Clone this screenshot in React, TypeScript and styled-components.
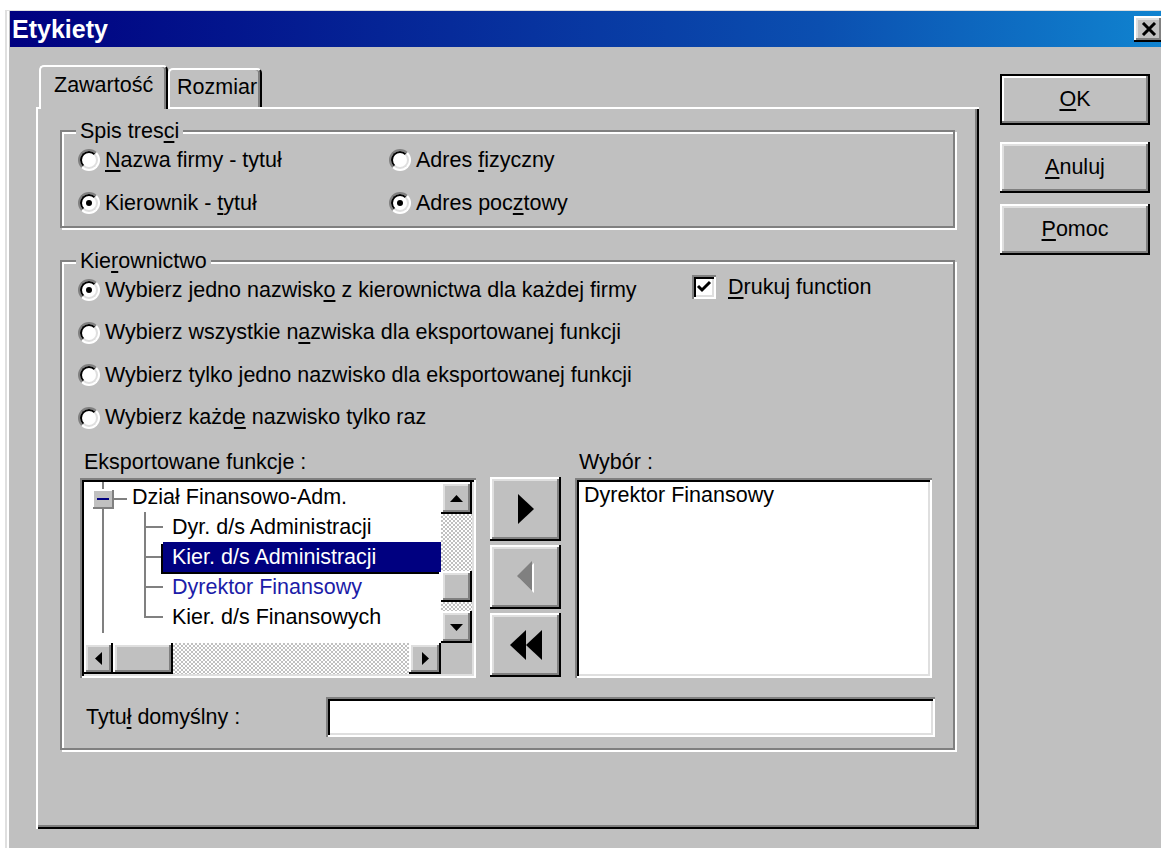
import React from 'react';
import styled, { createGlobalStyle, css } from 'styled-components';

const GlobalStyle = createGlobalStyle`
  html, body {
    margin: 0;
    padding: 0;
    background: #fff;
    overflow: hidden;
  }
  body {
    font-family: "Liberation Sans", Arial, sans-serif;
    font-size: 21.5px;
    color: #000;
  }
  * { box-sizing: border-box; }
`;

// classic 3d edges
const raised = css`
  background: #c0c0c0;
  box-shadow: inset -2px -2px 0 #000, inset 2px 2px 0 #fff,
    inset -4px -4px 0 #808080, inset 4px 4px 0 #dfdfdf;
`;

const sunken = css`
  background: #fff;
  box-shadow: inset 2px 2px 0 #808080, inset -2px -2px 0 #fff,
    inset 4px 4px 0 #000, inset -4px -4px 0 #dfdfdf;
`;

const Window = styled.div`
  margin: 10px 0 0 5px;
  width: 1162px;
  height: 838px;
  background: #c0c0c0;
  border-top: 1px solid #dfdfdf;
  border-left: 2px solid #dfdfdf;
  box-shadow: inset 2px 0 0 #fff;
  padding-left: 3px;
`;

const TitleBar = styled.div`
  height: 36px;
  display: flex;
  align-items: center;
  padding-left: 2px;
  background: linear-gradient(90deg, #000080 0%, #0b4fb0 70%, #1084d0 100%);
  color: #fff;
  font-weight: bold;
  font-size: 25px;
`;

const CloseButton = styled.div`
  ${raised};
  margin-left: auto;
  margin-right: 4px;
  width: 29px;
  height: 26px;
  display: flex;
  align-items: center;
  justify-content: center;
`;

const Content = styled.div`
  display: flex;
  padding: 18px 0 0 26px;
`;

const TabArea = styled.div`
  width: 943px;
  display: flex;
  flex-direction: column;
`;

const TabRow = styled.div`
  height: 42px;
  display: flex;
  align-items: flex-end;
  padding-left: 3px;
`;

const Tab = styled.div<{ $active?: boolean }>`
  background: #c0c0c0;
  border-top: 2px solid #fff;
  border-left: 2px solid #fff;
  border-right: 2px solid #000;
  border-radius: 5px 5px 0 0;
  box-shadow: inset -2px 0 0 #808080;
  line-height: 24px;
  white-space: nowrap;
  ${(p) =>
    p.$active
      ? css`
          position: relative;
          z-index: 1;
          width: 129px;
          height: 44px;
          margin-bottom: -2px;
          padding: 6px 0 0 13px;
        `
      : css`
          width: 94px;
          height: 39px;
          padding: 5px 0 0 7px;
        `}
`;

const Panel = styled.div`
  height: 722px;
  background: #c0c0c0;
  box-shadow: inset 2px 2px 0 #fff, inset -2px -2px 0 #000, inset -4px -4px 0 #808080;
  padding: 23px 24px 0 24px;
`;

const Group = styled.div<{ $gap?: number }>`
  position: relative;
  border: 2px solid #808080;
  box-shadow: inset 2px 2px 0 #fff, 2px 2px 0 #fff;
  margin-top: ${(p) => p.$gap ?? 0}px;
`;

const GroupTitle = styled.span`
  position: absolute;
  top: -13px;
  left: 14px;
  padding: 0 4px;
  background: #c0c0c0;
  line-height: 24px;
`;

const ContentsGrid = styled.div`
  display: grid;
  grid-template-columns: 311px auto;
  grid-auto-rows: 36px;
  row-gap: 7px;
  padding: 10px 0 5px 16px;
`;

const ManagementBody = styled.div`
  padding: 10px 18px 11px 16px;
`;

const ChoiceGrid = styled.div`
  display: grid;
  grid-template-columns: 614px auto;
  grid-auto-rows: 36px;
  row-gap: 6.5px;
`;

const Option = styled.label`
  display: flex;
  align-items: center;
  gap: 5px;
  white-space: nowrap;
`;

const RadioCircle = styled.span<{ $checked?: boolean }>`
  position: relative;
  flex: none;
  width: 22px;
  height: 22px;
  border-radius: 50%;
  border: 2px solid;
  border-color: #808080 #fff #fff #808080;
  background: #fff;

  &::before {
    content: '';
    position: absolute;
    inset: 0;
    border-radius: 50%;
    border: 2px solid;
    border-color: #000 #dfdfdf #dfdfdf #000;
  }

  &::after {
    content: '';
    display: ${(p) => (p.$checked ? 'block' : 'none')};
    position: absolute;
    left: 6px;
    top: 6px;
    width: 6px;
    height: 6px;
    border-radius: 50%;
    background: #000;
  }
`;

const CheckOption = styled.label`
  display: flex;
  align-items: center;
  gap: 12px;
  margin-bottom: 6px;
  white-space: nowrap;
`;

const CheckBox = styled.span`
  ${sunken};
  flex: none;
  width: 24px;
  height: 24px;
  display: flex;
  align-items: center;
  justify-content: center;
`;

const Key = styled.span`
  text-decoration: underline;
  text-underline-offset: 3px;
  text-decoration-thickness: 2px;
`;

const Lower = styled.div`
  margin-top: 14.5px;
  padding-left: 2px;
  display: grid;
  grid-template-columns: 396px 71px 357px;
  grid-template-rows: 24px 200px;
  column-gap: 14px;
  row-gap: 4px;
`;

const FieldLabel = styled.div<{ $col: number }>`
  grid-column: ${(p) => p.$col};
  grid-row: 1;
  line-height: 24px;
  padding-left: 4px;
  white-space: nowrap;
`;

const TreeBox = styled.div`
  ${sunken};
  grid-column: 1;
  grid-row: 2;
  padding: 4px;
  display: grid;
  grid-template-columns: 1fr 31px;
  grid-template-rows: 1fr 31px;
`;

const TreeViewport = styled.div`
  position: relative;
  overflow: hidden;
  background: #fff;
`;

const TreeLines = styled.svg`
  position: absolute;
  left: 0;
  top: 0;
`;

const TreeList = styled.div`
  position: relative;
`;

const TreeRow = styled.div<{ $depth: number; $selected?: boolean; $marked?: boolean }>`
  height: 30px;
  line-height: 30px;
  white-space: nowrap;
  margin-left: ${(p) => (p.$depth === 0 ? 44 : 79)}px;
  padding-left: ${(p) => (p.$depth === 0 ? 4 : 9)}px;
  color: ${(p) => (p.$selected ? '#fff' : p.$marked ? '#1c1ca8' : '#000')};
  background: ${(p) => (p.$selected ? '#000080' : 'transparent')};
  box-shadow: ${(p) => (p.$selected ? '-2px 2px 0 #000' : 'none')};
`;

const ScrollV = styled.div`
  display: flex;
  flex-direction: column;
`;

const ScrollH = styled.div`
  display: flex;
`;

const ScrollButton = styled.div<{ $size: number; $vertical?: boolean }>`
  ${raised};
  flex: none;
  ${(p) => (p.$vertical ? `height: ${p.$size}px;` : `width: ${p.$size}px;`)}
  display: flex;
  align-items: center;
  justify-content: center;
`;

const Thumb = styled.div<{ $size: number; $vertical?: boolean }>`
  ${raised};
  flex: none;
  ${(p) => (p.$vertical ? `height: ${p.$size}px;` : `width: ${p.$size}px;`)}
`;

const Track = styled.div<{ $size?: number }>`
  flex: ${(p) => (p.$size ? `none` : '1')};
  ${(p) => (p.$size ? `height: ${p.$size}px;` : '')}
  background-color: #c0c0c0;
  background-image: repeating-conic-gradient(#c0c0c0 0 25%, #fff 0 50%);
  background-size: 4px 4px;
`;

const Corner = styled.div`
  background: #c0c0c0;
`;

const MoveButtons = styled.div`
  grid-column: 2;
  grid-row: 2;
  display: flex;
  flex-direction: column;
  gap: 4px;
  margin-top: -1px;
`;

const MoveButton = styled.div`
  ${raised};
  height: 64px;
  display: flex;
  align-items: center;
  justify-content: center;
`;

const ChosenList = styled.div`
  ${sunken};
  grid-column: 3;
  grid-row: 2;
  padding: 4px 9px;
  line-height: 26px;
  white-space: nowrap;
`;

const TitleRow = styled.div`
  margin-top: 19px;
  padding-left: 2px;
  display: flex;
  align-items: center;
`;

const TitleLabel = styled.div`
  width: 246px;
  padding-left: 6px;
  white-space: nowrap;
`;

const TextField = styled.div`
  ${sunken};
  width: 609px;
  height: 40px;
`;

const ButtonColumn = styled.div`
  width: 150px;
  margin-left: 21px;
  padding-top: 9px;
  display: flex;
  flex-direction: column;
  gap: 11px;
`;

const DialogButton = styled.div<{ $default?: boolean }>`
  height: 51px;
  display: flex;
  align-items: center;
  justify-content: center;
  ${(p) =>
    p.$default
      ? css`
          margin-bottom: 6px;
          border: 2px solid #000;
          background: #c0c0c0;
          box-shadow: inset -2px -2px 0 #808080, inset 2px 2px 0 #fff;
        `
      : raised}
`;

const CloseIcon = () => (
  <svg width="16" height="14" viewBox="0 0 16 14">
    <path d="M2 1 L14 13 M14 1 L2 13" stroke="#000" strokeWidth="3" />
  </svg>
);

const CheckMark = () => (
  <svg width="16" height="16" viewBox="0 0 16 16">
    <polyline points="2,7 6,11 14,3" fill="none" stroke="#000" strokeWidth="3" />
  </svg>
);

const Arrow = ({ dir, w, h }: { dir: 'up' | 'down' | 'left' | 'right'; w: number; h: number }) => {
  const pts = {
    up: `${w / 2},0 ${w},${h} 0,${h}`,
    down: `0,0 ${w},0 ${w / 2},${h}`,
    left: `${w},0 ${w},${h} 0,${h / 2}`,
    right: `0,0 ${w},${h / 2} 0,${h}`,
  }[dir];
  return (
    <svg width={w} height={h} viewBox={`0 0 ${w} ${h}`}>
      <polygon points={pts} fill="#000" />
    </svg>
  );
};

const DisabledLeft = () => (
  <svg width="20" height="32" viewBox="0 0 20 32">
    <polygon points="18,2 18,32 3,17" fill="#fff" />
    <polygon points="16,0 16,30 1,15" fill="#808080" />
  </svg>
);

const DoubleLeft = () => (
  <svg width="32" height="30" viewBox="0 0 32 30">
    <polygon points="16,0 16,30 0,15" fill="#000" />
    <polygon points="32,0 32,30 16,15" fill="#000" />
  </svg>
);

const exported = [
  { label: 'Dział Finansowo-Adm.', depth: 0 },
  { label: 'Dyr. d/s Administracji', depth: 1 },
  { label: 'Kier. d/s Administracji', depth: 1, selected: true },
  { label: 'Dyrektor Finansowy', depth: 1, marked: true },
  { label: 'Kier. d/s Finansowych', depth: 1 },
];

const Radio = ({ checked, children }: { checked?: boolean; children: React.ReactNode }) => (
  <Option>
    <RadioCircle $checked={checked} />
    <span>{children}</span>
  </Option>
);

const App: React.FC = () => {
  return (
    <>
      <GlobalStyle />
      <Window>
        <TitleBar>
          Etykiety
          <CloseButton>
            <CloseIcon />
          </CloseButton>
        </TitleBar>
        <Content>
          <TabArea>
            <TabRow>
              <Tab $active>Zawartość</Tab>
              <Tab>Rozmiar</Tab>
            </TabRow>
            <Panel>
              <Group>
                <GroupTitle>
                  Spis tres<Key>c</Key>i
                </GroupTitle>
                <ContentsGrid>
                  <Radio>
                    <Key>N</Key>azwa firmy - tytuł
                  </Radio>
                  <Radio>
                    Adres <Key>f</Key>izyczny
                  </Radio>
                  <Radio checked>
                    Kierownik - <Key>t</Key>ytuł
                  </Radio>
                  <Radio checked>
                    Adres poc<Key>z</Key>towy
                  </Radio>
                </ContentsGrid>
              </Group>

              <Group $gap={32}>
                <GroupTitle>
                  Kie<Key>r</Key>ownictwo
                </GroupTitle>
                <ManagementBody>
                  <ChoiceGrid>
                    <Radio checked>
                      Wybierz jedno nazwisk<Key>o</Key> z kierownictwa dla każdej firmy
                    </Radio>
                    <CheckOption>
                      <CheckBox>
                        <CheckMark />
                      </CheckBox>
                      <span>
                        <Key>D</Key>rukuj function
                      </span>
                    </CheckOption>
                    <Radio>
                      Wybierz wszystkie n<Key>a</Key>zwiska dla eksportowanej funkcji
                    </Radio>
                    <span />
                    <Radio>Wybierz tylko jedno nazwisko dla eksportowanej funkcji</Radio>
                    <span />
                    <Radio>
                      Wybierz każd<Key>e</Key> nazwisko tylko raz
                    </Radio>
                  </ChoiceGrid>

                  <Lower>
                    <FieldLabel $col={1}>Eksportowane funkcje :</FieldLabel>
                    <FieldLabel $col={3}>Wybór :</FieldLabel>
                    <TreeBox>
                      <TreeViewport>
                        <TreeLines width="100" height="160">
                          <line x1="19" y1="0" x2="19" y2="151" stroke="#808080" strokeWidth="2" />
                          <line x1="29" y1="17" x2="43" y2="17" stroke="#808080" strokeWidth="2" />
                          <line x1="61" y1="30" x2="61" y2="136" stroke="#808080" strokeWidth="2" />
                          {[45, 75, 105, 135].map((y) => (
                            <line key={y} x1="61" y1={y} x2="79" y2={y} stroke="#808080" strokeWidth="2" />
                          ))}
                          <rect x="9" y="8" width="20" height="18" fill="#c0c0c0" />
                          <path d="M9 26 V8 H29" fill="none" stroke="#fff" strokeWidth="2" />
                          <path d="M9 26 H29 V8" fill="none" stroke="#808080" strokeWidth="2" />
                          <line x1="13" y1="17" x2="25" y2="17" stroke="#000080" strokeWidth="2" />
                        </TreeLines>
                        <TreeList>
                          {exported.map((item) => (
                            <TreeRow
                              key={item.label}
                              $depth={item.depth}
                              $selected={item.selected}
                              $marked={item.marked}
                            >
                              {item.label}
                            </TreeRow>
                          ))}
                        </TreeList>
                      </TreeViewport>
                      <ScrollV>
                        <ScrollButton $vertical $size={32}>
                          <Arrow dir="up" w={13} h={7} />
                        </ScrollButton>
                        <Track $size={57} />
                        <Thumb $vertical $size={31} />
                        <Track />
                        <ScrollButton $vertical $size={32}>
                          <Arrow dir="down" w={13} h={7} />
                        </ScrollButton>
                      </ScrollV>
                      <ScrollH>
                        <ScrollButton $size={29}>
                          <Arrow dir="left" w={7} h={13} />
                        </ScrollButton>
                        <Thumb $size={60} />
                        <Track />
                        <ScrollButton $size={32}>
                          <Arrow dir="right" w={7} h={13} />
                        </ScrollButton>
                      </ScrollH>
                      <Corner />
                    </TreeBox>

                    <MoveButtons>
                      <MoveButton>
                        <Arrow dir="right" w={16} h={30} />
                      </MoveButton>
                      <MoveButton>
                        <DisabledLeft />
                      </MoveButton>
                      <MoveButton>
                        <DoubleLeft />
                      </MoveButton>
                    </MoveButtons>

                    <ChosenList>Dyrektor Finansowy</ChosenList>
                  </Lower>

                  <TitleRow>
                    <TitleLabel>
                      Tytu<Key>ł</Key> domyślny :
                    </TitleLabel>
                    <TextField />
                  </TitleRow>
                </ManagementBody>
              </Group>
            </Panel>
          </TabArea>

          <ButtonColumn>
            <DialogButton $default>
              <span>
                <Key>O</Key>K
              </span>
            </DialogButton>
            <DialogButton>
              <span>
                <Key>A</Key>nuluj
              </span>
            </DialogButton>
            <DialogButton>
              <span>
                <Key>P</Key>omoc
              </span>
            </DialogButton>
          </ButtonColumn>
        </Content>
      </Window>
    </>
  );
};

export default App;
